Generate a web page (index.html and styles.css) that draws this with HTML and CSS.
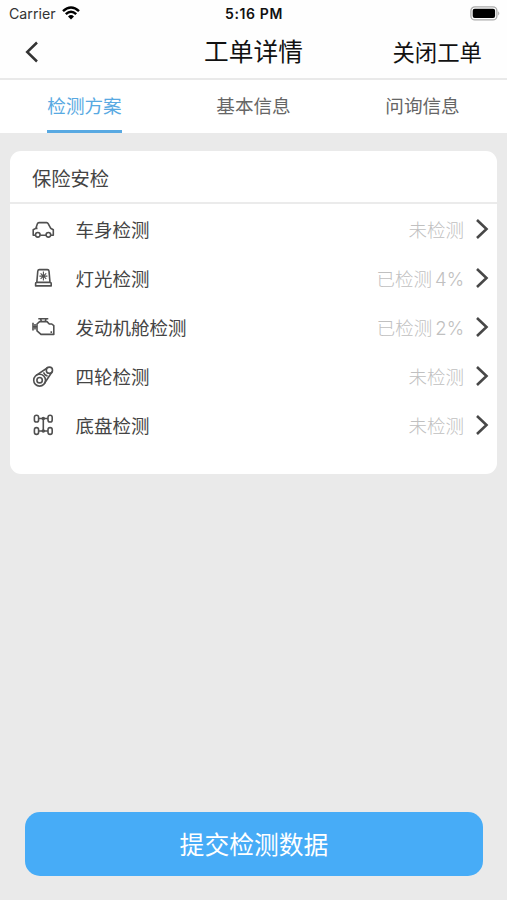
FILE: index.html
```html
<!DOCTYPE html>
<html lang="zh-CN">
<head>
<meta charset="utf-8">
<meta name="viewport" content="width=device-width, initial-scale=1">
<title>工单详情</title>
<link rel="stylesheet" href="styles.css">
</head>
<body>
<div class="app">
  <header class="top">
    <div class="status">
      <div class="carrier">
        <span>Carrier</span>
        <svg width="18" height="14" viewBox="0 0 18 14" fill="none" stroke="#000" stroke-width="2.5"><path d="M1 5.2Q9-2.1 17 5.2"/><path d="M3.8 8.2Q9 3.4 14.2 8.2"/><path d="M6 10.5Q9 7.7 12 10.5L9 13.5Z" fill="#000" stroke="none"/></svg>
      </div>
      <span class="time">5:16 PM</span>
      <svg class="battery" width="32" height="15" viewBox="0 0 32 15"><rect x="1.9" y=".9" width="26" height="13" rx="4" fill="#fff" stroke="#aaa" stroke-width="1.3"/><rect x="3.7" y="2.7" width="22.4" height="9.4" rx="2" fill="#000"/><path d="M29.2 5.2Q31.4 7.4 29.2 9.6Z" fill="#aaa"/></svg>
    </div>
    <div class="nav">
      <svg class="back" width="14" height="22" viewBox="0 0 14 22" fill="none" stroke="#333" stroke-width="2.5"><path d="M13 1.5 3.2 11l9.8 9.5"/></svg>
      <h1>工单详情</h1>
      <span class="close">关闭工单</span>
    </div>
  </header>
  <nav class="tabs">
    <div class="tab"><span class="label active">检测方案</span></div>
    <div class="tab"><span class="label">基本信息</span></div>
    <div class="tab"><span class="label">问询信息</span></div>
  </nav>
  <main class="content">
    <section class="card">
      <h2>保险安检</h2>
      <ul class="list">
        <li>
          <svg class="icon" viewBox="0 0 24 24"><path d="M4.2 18.2H2.2V12.8L4.8 11.4 6.4 6.8Q6.8 5.6 8 5.6H15.6Q16.7 5.6 17.3 6.8L19.6 11.2 22.3 12.8V18.2H20M9.2 18.2H15M4.5 11.4H6.5"/><circle cx="6.8" cy="17.8" r="2.3"/><circle cx="17.4" cy="17.8" r="2.3"/></svg>
          <span class="name">车身检测</span><span class="state">未检测</span>
          <svg class="arrow" viewBox="0 0 14 22"><path d="M2 2 11.5 11 2 20"/></svg>
        </li>
        <li>
          <svg class="icon" viewBox="0 0 24 24"><path d="M5.8 16.4 6.8 5Q7 3.6 8.4 3.6H16.4Q17.8 3.6 18 5L19 16.4ZM5.8 16.4Q4.6 16.4 4.6 17.6V19.9H20.2V17.6Q20.2 16.4 19 16.4"/><path class="thin" d="M12.4 5.6V14.6M8.4 10.1H16.4M9.6 7.3 15.2 12.9M15.2 7.3 9.6 12.9"/></svg>
          <span class="name">灯光检测</span><span class="state">已检测<i>4%</i></span>
          <svg class="arrow" viewBox="0 0 14 22"><path d="M2 2 11.5 11 2 20"/></svg>
        </li>
        <li>
          <svg class="icon" viewBox="0 0 24 24"><path d="M7.3 3.8H17.3M9.6 3.8 10.4 6.6M15 3.8 14.2 6.6M8.6 6.6H16L18.3 9H20.8L22.8 10.6V19.4H10L6 15.8V9ZM2 7.8V15.6M2 11.8H6M4 9V14.4M20.3 16.2V18"/></svg>
          <span class="name">发动机舱检测</span><span class="state">已检测<i>2%</i></span>
          <svg class="arrow" viewBox="0 0 14 22"><path d="M2 2 11.5 11 2 20"/></svg>
        </li>
        <li>
          <svg class="icon" viewBox="0 0 24 24"><circle cx="8.6" cy="16.2" r="5.9"/><circle cx="8.6" cy="16.2" r="2.7"/><circle cx="18.4" cy="6.2" r="3.1"/><path d="M4.8 11.6 16.2 4M13.2 19.8 21.1 7.8M12.6 8.4Q13.4 11.4 16.6 12"/></svg>
          <span class="name">四轮检测</span><span class="state">未检测</span>
          <svg class="arrow" viewBox="0 0 14 22"><path d="M2 2 11.5 11 2 20"/></svg>
        </li>
        <li>
          <svg class="icon" viewBox="0 0 24 24"><rect x="3.4" y="2.2" width="4.2" height="6.8" rx="2.1"/><rect x="17" y="2.2" width="4.2" height="6.8" rx="2.1"/><rect x="3.4" y="14.6" width="4.2" height="6.8" rx="2.1"/><rect x="17" y="14.6" width="4.2" height="6.8" rx="2.1"/><path d="M7.6 5.5H17M7.6 18H17M12.3 5.5V18"/><circle cx="12.3" cy="5.5" r="1"/><circle cx="12.3" cy="18" r="1"/></svg>
          <span class="name">底盘检测</span><span class="state">未检测</span>
          <svg class="arrow" viewBox="0 0 14 22"><path d="M2 2 11.5 11 2 20"/></svg>
        </li>
      </ul>
    </section>
    <button class="submit" type="button">提交检测数据</button>
  </main>
</div>
</body>
</html>
```
FILE: styles.css
```css
* { box-sizing: border-box; }
body { margin: 0; font-family: Inter, "Noto Sans CJK SC", sans-serif; background: #eaeaea; }
h1, h2, ul { margin: 0; padding: 0; font-weight: 400; }
svg { display: block; flex: none; }

.app { width: 100%; height: 900px; display: flex; flex-direction: column; background: #eaeaea; }
.top { height: 80px; background: #fefefe; border-bottom: 2px solid #e9e9e9; }
.status { height: 26px; padding: 0 6px 0 9px; display: grid; grid-template-columns: 1fr auto 1fr; align-items: center; color: #111; }
.carrier { display: flex; align-items: center; gap: 6px; color: #333; font-size: 14.2px; }
.time { font-weight: 600; font-size: 14px; letter-spacing: .6px; margin-right: 2px; }
.battery { justify-self: end; }
.nav { height: 52px; padding: 0 25px 0 24px; display: grid; grid-template-columns: 1fr auto 1fr; align-items: center; color: #111; }
.nav h1 { font-size: 24.7px; line-height: 50px; padding-left: 1px; }
.close { justify-self: end; padding-bottom: 2px; font-size: 22.4px; }

.tabs { height: 53px; display: grid; grid-template-columns: repeat(3, 1fr); background: #fff; }
.tab { display: flex; justify-content: center; }
.label { height: 53px; line-height: 53px; font-size: 18.6px; color: #666; border-bottom: 3px solid transparent; }
.label.active { color: #58a9e2; border-bottom-color: #58a9e2; }

.content { flex: 1; display: flex; flex-direction: column; justify-content: space-between; padding: 18px 10px 24px; }
.card { height: 323px; background: #fff; border-radius: 11px; }
.card h2 { height: 53px; padding-left: 22px; border-bottom: 2px solid #ebebeb; font-size: 19.3px; line-height: 56px; color: #444; }
.list { list-style: none; }
.list li { height: 49px; padding: 0 8px 0 21px; display: flex; align-items: center; }
.icon { width: 24px; height: 24px; margin-top: 1px; fill: none; stroke: #505050; stroke-width: 1.6; stroke-linejoin: round; }
.icon .thin { stroke-width: 1.1; }
.name { margin-left: 20.5px; font-size: 18.5px; color: #444; }
.state { margin-left: auto; font-size: 18.5px; font-weight: 300; color: #c0c0c0; }
.state i { font-style: normal; margin-left: 3px; }
.arrow { width: 14px; height: 22px; margin-left: 11px; fill: none; stroke: #484848; stroke-width: 2.6; }

.submit { height: 64px; margin: 0 14px 0 15px; padding: 0 0 2px; border: 0; border-radius: 15px; background: #47acf7; color: #fff; font: 400 24.8px "Noto Sans CJK SC", sans-serif; }
```
